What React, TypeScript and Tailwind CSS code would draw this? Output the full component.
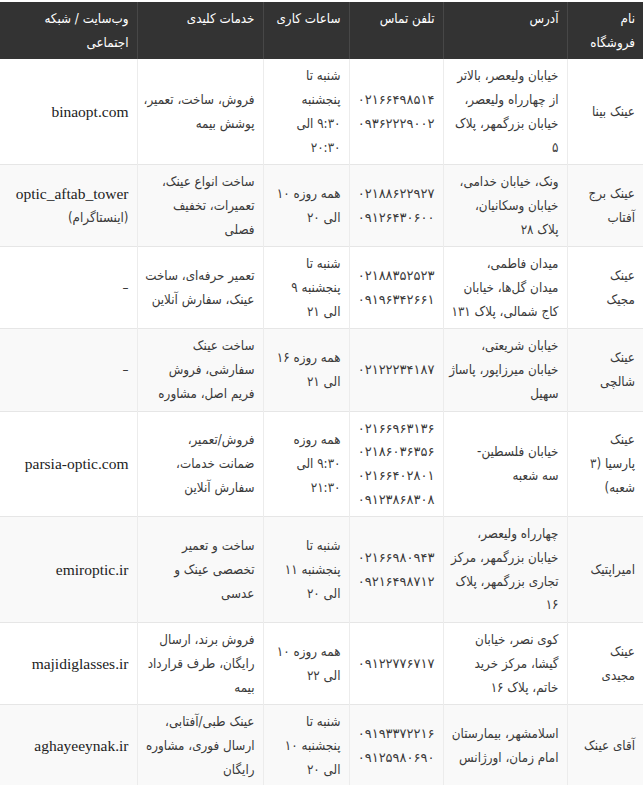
import React from "react";

type Row = {
  name: string[];
  address: string[];
  phone: string[];
  hours: string[];
  services: string[];
  site: string[];
};

const headers: string[][] = [
  ["نام", "فروشگاه"],
  ["آدرس"],
  ["تلفن تماس"],
  ["ساعات کاری"],
  ["خدمات کلیدی"],
  ["وب‌سایت / شبکه", "اجتماعی"],
];

const rows: Row[] = [
  {
    name: ["عینک بینا"],
    address: ["خیابان ولیعصر، بالاتر", "از چهارراه ولیعصر،", "خیابان بزرگمهر، پلاک", "۵"],
    phone: ["۰۲۱۶۶۴۹۸۵۱۴", "۰۹۳۶۲۲۲۹۰۰۲"],
    hours: ["شنبه تا", "پنجشنبه", "۹:۳۰ الی", "۲۰:۳۰"],
    services: ["فروش، ساخت، تعمیر،", "پوشش بیمه"],
    site: ["binaopt.com"],
  },
  {
    name: ["عینک برج", "آفتاب"],
    address: ["ونک، خیابان خدامی،", "خیابان وسکانیان،", "پلاک ۲۸"],
    phone: ["۰۲۱۸۸۶۲۲۹۲۷", "۰۹۱۲۶۴۳۰۶۰۰"],
    hours: ["همه روزه ۱۰", "الی ۲۰"],
    services: ["ساخت انواع عینک،", "تعمیرات، تخفیف", "فصلی"],
    site: ["optic_aftab_tower", "(اینستاگرام)"],
  },
  {
    name: ["عینک", "مجیک"],
    address: ["میدان فاطمی،", "میدان گل‌ها، خیابان", "کاج شمالی، پلاک ۱۳۱"],
    phone: ["۰۲۱۸۸۳۵۲۵۲۳", "۰۹۱۹۶۳۴۲۶۶۱"],
    hours: ["شنبه تا", "پنجشنبه ۹", "الی ۲۱"],
    services: ["تعمیر حرفه‌ای، ساخت", "عینک، سفارش آنلاین"],
    site: ["–"],
  },
  {
    name: ["عینک", "شالچی"],
    address: ["خیابان شریعتی،", "خیابان میرزاپور، پاساژ", "سهیل"],
    phone: ["۰۲۱۲۲۲۳۴۱۸۷"],
    hours: ["همه روزه ۱۶", "الی ۲۱"],
    services: ["ساخت عینک", "سفارشی، فروش", "فریم اصل، مشاوره"],
    site: ["–"],
  },
  {
    name: ["عینک", "پارسیا (۳", "شعبه)"],
    address: ["خیابان فلسطین-", "سه شعبه"],
    phone: ["۰۲۱۶۶۹۶۳۱۳۶", "۰۲۱۸۶۰۳۶۳۵۶", "۰۲۱۶۶۴۰۲۸۰۱", "۰۹۱۲۳۸۶۸۳۰۸"],
    hours: ["همه روزه", "۹:۳۰ الی", "۲۱:۳۰"],
    services: ["فروش/تعمیر،", "ضمانت خدمات،", "سفارش آنلاین"],
    site: ["parsia-optic.com"],
  },
  {
    name: ["امیراپتیک"],
    address: ["چهارراه ولیعصر،", "خیابان بزرگمهر، مرکز", "تجاری بزرگمهر، پلاک", "۱۶"],
    phone: ["۰۲۱۶۶۹۸۰۹۴۳", "۰۹۲۱۶۴۹۸۷۱۲"],
    hours: ["شنبه تا", "پنجشنبه ۱۱", "الی ۲۰"],
    services: ["ساخت و تعمیر", "تخصصی عینک و", "عدسی"],
    site: ["emiroptic.ir"],
  },
  {
    name: ["عینک", "مجیدی"],
    address: ["کوی نصر، خیابان", "گیشا، مرکز خرید", "خاتم، پلاک ۱۶"],
    phone: ["۰۹۱۲۲۷۷۶۷۱۷"],
    hours: ["همه روزه ۱۰", "الی ۲۲"],
    services: ["فروش برند، ارسال", "رایگان، طرف قرارداد", "بیمه"],
    site: ["majidiglasses.ir"],
  },
  {
    name: ["آقای عینک"],
    address: ["اسلامشهر، بیمارستان", "امام زمان، اورژانس"],
    phone: ["۰۹۱۹۳۳۷۲۲۱۶", "۰۹۱۲۵۹۸۰۶۹۰"],
    hours: ["شنبه تا", "پنجشنبه ۱۰", "الی ۲۰"],
    services: ["عینک طبی/آفتابی،", "ارسال فوری، مشاوره", "رایگان"],
    site: ["aghayeeynak.ir"],
  },
];

const latin = /[a-z]/i;

function Lines({ lines, digits }: { lines: string[]; digits?: boolean }) {
  return (
    <>
      {lines.map((l, i) =>
        latin.test(l) ? (
          <div
            key={i}
            className="whitespace-nowrap text-[15.5px] text-[#222] [font-stretch:normal]"
            style={{ fontFamily: '"Liberation Serif", "DejaVu Serif", "Times New Roman", serif' }}
          >
            {l}
          </div>
        ) : (
          <div
            key={i}
            className={`whitespace-nowrap ${digits ? "text-[13px] [font-stretch:normal]" : ""}`}
          >
            {l}
          </div>
        )
      )}
    </>
  );
}

export default function App() {
  return (
    <div
      dir="rtl"
      className="bg-white pt-[2px] text-[13.3px] leading-[23.7px] text-[#3a3a3a] [font-stretch:condensed]"
      style={{ fontFamily: '"DejaVu Sans", "Noto Sans", sans-serif' }}
    >
      <table className="w-[643px] table-fixed border-collapse">
        <colgroup>
          <col className="w-[76px]" />
          <col className="w-[124px]" />
          <col className="w-[94px]" />
          <col className="w-[86px]" />
          <col className="w-[126px]" />
          <col className="w-[137px]" />
        </colgroup>
        <thead>
          <tr className="bg-[#333333] text-white">
            {headers.map((h, i) => (
              <th
                key={i}
                className={`pr-2 pl-1 py-[5px] text-right align-top font-normal ${
                  i < 5 ? "border-l border-[#474747]" : ""
                }`}
              >
                <Lines lines={h} />
              </th>
            ))}
          </tr>
        </thead>
        <tbody>
          {rows.map((r, i) => (
            <tr
              key={i}
              className={`border-b border-[#e6e6e6] ${i % 2 === 1 ? "bg-[#f9f9f9]" : "bg-white"}`}
            >
              {[r.name, r.address, r.phone, r.hours, r.services, r.site].map((c, j) => (
                <td
                  key={j}
                  className={`pr-2 pl-1 py-[5px] text-right align-middle ${
                    j < 5 ? "border-l border-[#ececec]" : ""
                  }`}
                >
                  <Lines lines={c} digits={j === 2} />
                </td>
              ))}
            </tr>
          ))}
        </tbody>
      </table>
    </div>
  );
}
